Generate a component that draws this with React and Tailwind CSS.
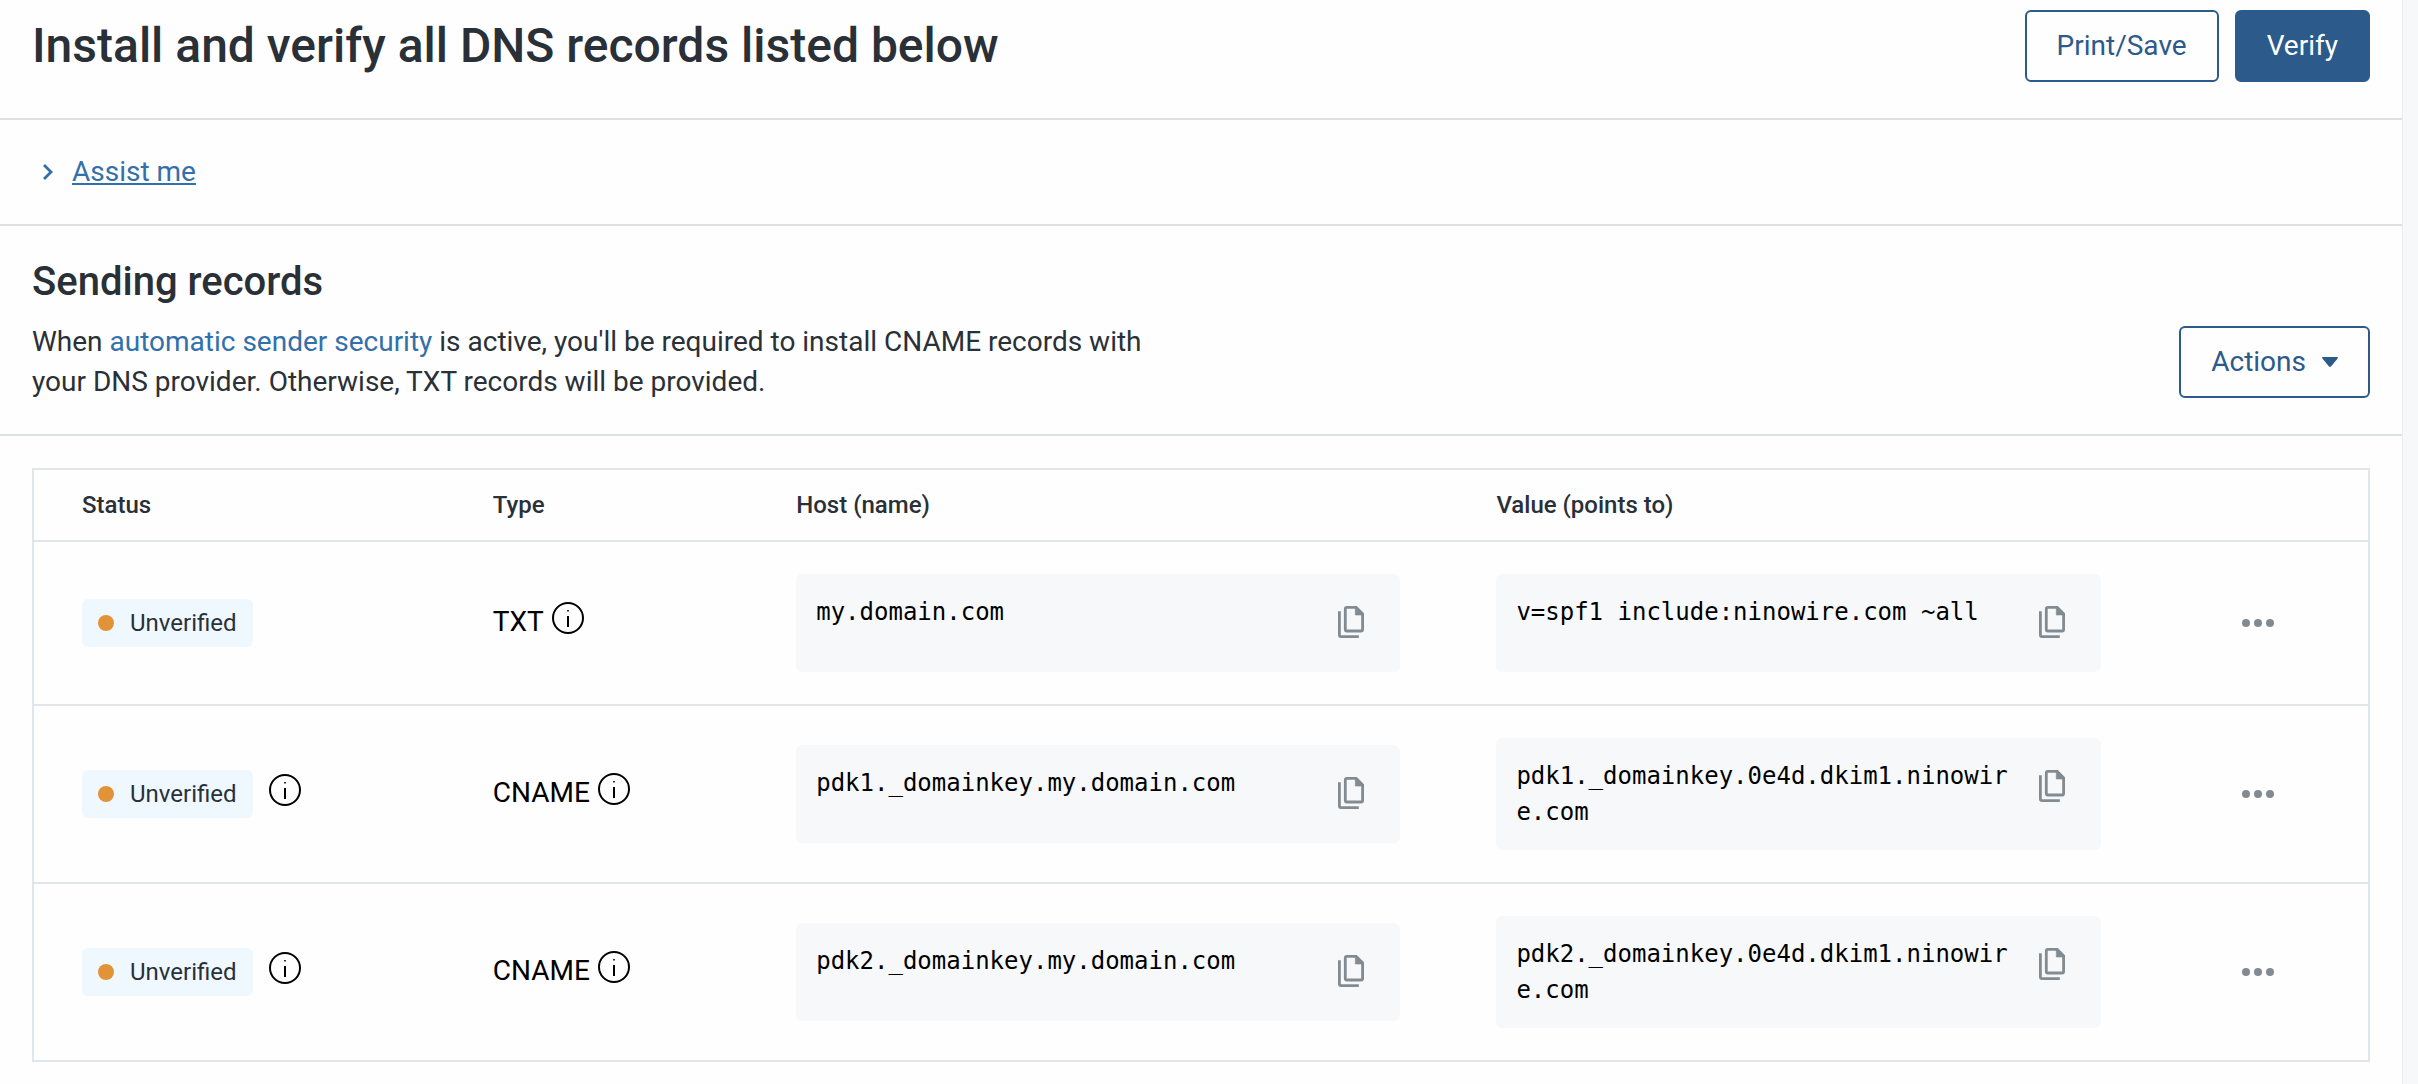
import React, { useState } from 'react';

const records = [
  {
    id: 'spf',
    type: 'TXT',
    host: 'my.domain.com',
    value: 'v=spf1 include:ninowire.com ~all',
    hasDetails: false,
  },
  {
    id: 'dkim1',
    type: 'CNAME',
    host: 'pdk1._domainkey.my.domain.com',
    value: 'pdk1._domainkey.0e4d.dkim1.ninowire.com',
    hasDetails: true,
  },
  {
    id: 'dkim2',
    type: 'CNAME',
    host: 'pdk2._domainkey.my.domain.com',
    value: 'pdk2._domainkey.0e4d.dkim1.ninowire.com',
    hasDetails: true,
  },
];

const buttonClass = "h-[72px] px-[30px] border-2 border-[#2b5a8b] rounded-md text-[28px] leading-10 cursor-pointer";
const outlineClass = `${buttonClass} bg-[#fefefe] text-[#2b5a8b]`;
const headClass = "px-12 py-[19px] text-left text-2xl leading-8 font-medium text-[#2a3037]";
const cellClass = "px-12 py-8 border-t-2 border-[#e1e6ea] align-middle";

const InfoIcon = () => (
  <svg viewBox="0 0 32 32" className="w-8 h-8 block" fill="none" aria-hidden="true">
    <circle cx="16" cy="16" r="15" stroke="#000" strokeWidth="2" />
    <path d="M15.2 8h1.6v1.6h-1.6zM15 14h2v11h-2z" fill="#000" />
  </svg>
);

const CopyIcon = () => (
  <svg viewBox="0 0 26 32" className="w-[26px] h-8 block" fill="none" aria-hidden="true">
    <path d="M1.4 5.3V29a1.6 1.6 0 0 0 1.6 1.6h17.8" stroke="#828b92" strokeWidth="2.8" />
    <path d="M8.9 1.4h9.3l6.4 6.4v15.6a1.6 1.6 0 0 1-1.6 1.6H8.9a1.6 1.6 0 0 1-1.6-1.6V3a1.6 1.6 0 0 1 1.6-1.6z" stroke="#828b92" strokeWidth="2.8" />
    <path d="M17.3 1v8h8z" fill="#828b92" stroke="#828b92" strokeWidth="0.6" />
  </svg>
);

const InfoButton = ({ label }) => (
  <button type="button" aria-label={label} className="mb-2 cursor-pointer">
    <InfoIcon />
  </button>
);

const StatusBadge = () => (
  <span className="inline-flex items-center gap-4 h-12 px-4 rounded-md bg-[#f0f8ff] text-2xl leading-8 text-[#2a3037]">
    <span className="w-4 h-4 rounded-full bg-[#e29237]" />
    Unverified
  </span>
);

const CopyField = ({ text, label }) => {
  const handleCopy = () => {
    navigator.clipboard?.writeText(text);
  };

  return (
    <div className="flex items-start gap-2 p-5 rounded-md bg-[#f6f8fa]">
      <code className="flex-1 min-w-0 break-all font-['DejaVu_Sans_Mono',monospace] text-2xl leading-9 text-black">
        {text}
      </code>
      <button
        type="button"
        aria-label={label}
        onClick={handleCopy}
        className="flex items-center justify-center w-[58px] h-[58px] pb-[2px] cursor-pointer"
      >
        <CopyIcon />
      </button>
    </div>
  );
};

const RecordRow = ({ record }) => (
  <tr>
    <td className={cellClass}>
      <div className="flex items-center gap-4">
        <StatusBadge />
        {record.hasDetails && <InfoButton label="Status details" />}
      </div>
    </td>
    <td className={cellClass}>
      <div className="flex items-center gap-2 pb-[2px] text-[28px] leading-10 text-black">
        {record.type}
        <InfoButton label={`About ${record.type} records`} />
      </div>
    </td>
    <td className={cellClass}>
      <CopyField text={record.host} label="Copy host" />
    </td>
    <td className={cellClass}>
      <CopyField text={record.value} label="Copy value" />
    </td>
    <td className="border-t-2 border-[#e1e6ea] align-middle">
      <button type="button" aria-label="More options" className="flex gap-1 mx-auto py-4 cursor-pointer">
        <span className="w-2 h-2 rounded-full bg-[#828b92]" />
        <span className="w-2 h-2 rounded-full bg-[#828b92]" />
        <span className="w-2 h-2 rounded-full bg-[#828b92]" />
      </button>
    </td>
  </tr>
);

const App = () => {
  const [assistOpen, setAssistOpen] = useState(false);

  return (
    <div className="min-h-screen flex pr-[15px] bg-[#f6f8fa] font-[Roboto,sans-serif] text-[#2a3037]">
      <main className="flex-1 min-w-0 pb-5 bg-[#fefefe] border-r border-[#ebecf0]">
        <header className="flex items-center justify-between px-8 pt-[10px] pb-9 border-b-2 border-[#dce1e5]">
          <h1 className="text-5xl leading-[56px] font-medium">Install and verify all DNS records listed below</h1>
          <div className="flex gap-4">
            <button type="button" className={outlineClass}>Print/Save</button>
            <button type="button" className={`${buttonClass} bg-[#2b5a8b] text-white`}>Verify</button>
          </div>
        </header>

        <section className="px-8 py-8 border-b-2 border-[#dce1e5]">
          <button
            type="button"
            aria-expanded={assistOpen}
            onClick={() => setAssistOpen(!assistOpen)}
            className="flex items-center text-[28px] leading-10 text-[#3370a9] cursor-pointer"
          >
            <svg viewBox="0 0 40 40" className="w-10 h-10" fill="none" aria-hidden="true">
              <path d="M12 13l7 7-7 7" stroke="#3370a9" strokeWidth="2.8" />
            </svg>
            <span className="underline decoration-2 underline-offset-2">Assist me</span>
          </button>
        </section>

        <section className="px-8 pt-7 pb-8 border-b-2 border-[#dce1e5]">
          <h2 className="mb-3 text-[40px] leading-[56px] font-medium">Sending records</h2>
          <div className="flex items-center justify-between gap-8">
            <p className="max-w-[1160px] text-[28px] leading-10">
              When <a href="#sender-security" className="text-[#3370a9]">automatic sender security</a> is active, you'll be required to install CNAME records with your DNS provider. Otherwise, TXT records will be provided.
            </p>
            <button type="button" aria-haspopup="menu" className={`${outlineClass} flex items-center gap-4`}>
              Actions
              <svg viewBox="0 0 16 10" className="w-4 h-[10px]" aria-hidden="true">
                <path d="M1 0h14q1.5.2.6 1.6L9 9.4q-1 .9-2 0L.4 1.6Q-.5.2 1 0z" fill="#2b5a8b" />
              </svg>
            </button>
          </div>
        </section>

        <div className="mx-8 mt-8 border-2 border-[#e1e6ea]">
          <table className="w-full table-fixed">
            <thead>
              <tr>
                <th scope="col" className={`${headClass} w-[17.6%]`}>Status</th>
                <th scope="col" className={`${headClass} w-[13%]`}>Type</th>
                <th scope="col" className={`${headClass} w-[30%]`}>Host (name)</th>
                <th scope="col" className={`${headClass} w-[30%]`}>Value (points to)</th>
                <td />
              </tr>
            </thead>
            <tbody>
              {records.map((record) => (
                <RecordRow key={record.id} record={record} />
              ))}
            </tbody>
          </table>
        </div>
      </main>
    </div>
  );
};

export default App;
